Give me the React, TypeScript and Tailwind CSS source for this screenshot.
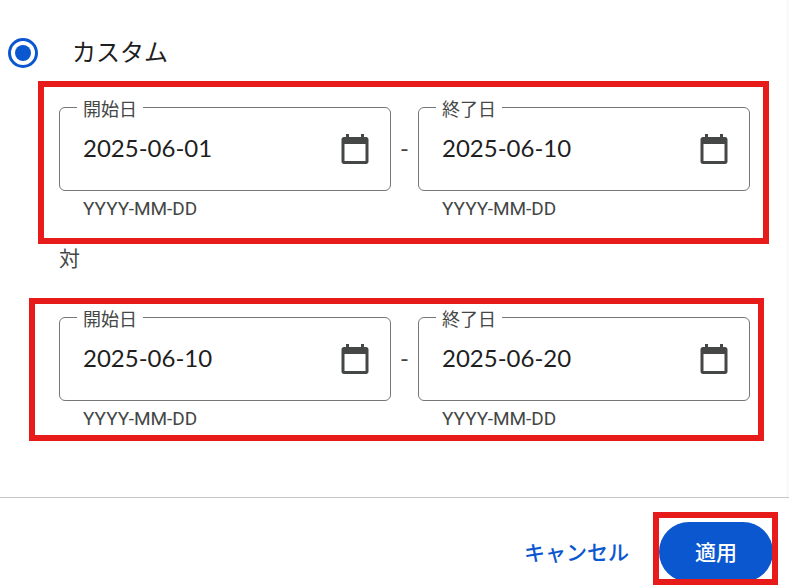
import { useState } from 'react';

interface DateFieldProps {
  id: string;
  label: string;
  defaultValue: string;
}

interface DateRangeProps {
  name: string;
  start: string;
  end: string;
}

function CalendarIcon() {
  return (
    <svg viewBox="0 0 24 24" className="size-9" fill="#444746" aria-hidden="true">
      <path
        fillRule="evenodd"
        d="M6 2h2v2h8V2h2v2h1.4c.9 0 1.6.7 1.6 1.6v14.8c0 .9-.7 1.6-1.6 1.6H4.600c-.9 0-1.600-.7-1.600-1.600V5.600C3 4.700 3.700 4 4.600 4H6V2Zm-1 6.700V20h14V8.700H5Z"
      />
    </svg>
  );
}

function DateField({ id, label, defaultValue }: DateFieldProps) {
  return (
    <div className="min-w-0 flex-1">
      <fieldset className="min-w-0 rounded-md border border-[#747775] px-[17px]">
        <legend className="px-1.5 pt-1.5 text-lg leading-5 text-[#444746]">
          <label htmlFor={id}>{label}</label>
        </legend>
        <div className="flex h-[70px] items-center pb-3 pl-1.5">
          <input
            id={id}
            type="text"
            defaultValue={defaultValue}
            aria-describedby={`${id}-hint`}
            className="h-9 min-w-0 flex-1 bg-transparent pb-1 font-['Lato','Noto_Sans_CJK_JP',sans-serif] text-2xl text-[#1f1f1f] outline-none"
          />
          <button type="button" aria-label={`${label}を選択`} className="shrink-0 cursor-pointer">
            <CalendarIcon />
          </button>
        </div>
      </fieldset>
      <p id={`${id}-hint`} className="pt-1.5 pl-6 text-[19px] leading-6 text-[#444746]">
        YYYY-MM-DD
      </p>
    </div>
  );
}

function DateRange({ name, start, end }: DateRangeProps) {
  return (
    <div className="flex">
      <DateField id={`${name}-start`} label="開始日" defaultValue={start} />
      <span className="w-[27px] shrink-0 pt-10 text-center font-['Lato',sans-serif] text-2xl leading-7 text-[#444746]">
        -
      </span>
      <DateField id={`${name}-end`} label="終了日" defaultValue={end} />
    </div>
  );
}

export default function App() {
  const [custom, setCustom] = useState(true);

  return (
    <div className="bg-white font-['Roboto','Noto_Sans_CJK_JP',sans-serif] text-[#1f1f1f]">
      <main className="border-r-3 border-[#fafafa] pt-[33px] pr-9 pb-[66px] pl-2">
        <label className="flex h-10 items-center gap-[34px] text-2xl">
          <input
            type="radio"
            name="range"
            checked={custom}
            onChange={() => setCustom(true)}
            className="size-[30px] appearance-none rounded-full border-3 border-[#0b57d0] bg-[#0b57d0] bg-clip-content p-1"
          />
          カスタム
        </label>

        <div className="pt-[21px] pl-[51px]">
          <div className="relative">
            <DateRange name="current" start="2025-06-01" end="2025-06-10" />
            <div className="pointer-events-none absolute -top-[13px] -right-[19px] -bottom-[23px] -left-[21px] border-6 border-[#e81b1b]" />
          </div>
          <p className="pt-[22px] pb-[29px] text-[21px] leading-8 text-[#444746]">対</p>
          <div className="relative">
            <DateRange name="previous" start="2025-06-10" end="2025-06-20" />
            <div className="pointer-events-none absolute -top-1.5 -right-3.5 -bottom-[10px] -left-[30px] border-6 border-[#e81b1b]" />
          </div>
        </div>
      </main>

      <footer className="flex items-center justify-end gap-[30px] border-t border-[#c7c7c7] pt-6 pr-4 pb-1.5 text-[21px] font-medium">
        <button type="button" className="cursor-pointer pt-1 text-[#0b57d0]">
          キャンセル
        </button>
        <div className="relative">
          <button type="button" className="h-[60px] w-[114px] cursor-pointer rounded-full bg-[#0b57d0] pt-1 text-white">
            適用
          </button>
          <div className="pointer-events-none absolute -top-[10px] -right-[5px] -bottom-[3px] -left-1.5 border-6 border-[#e81b1b]" />
        </div>
      </footer>
    </div>
  );
}
